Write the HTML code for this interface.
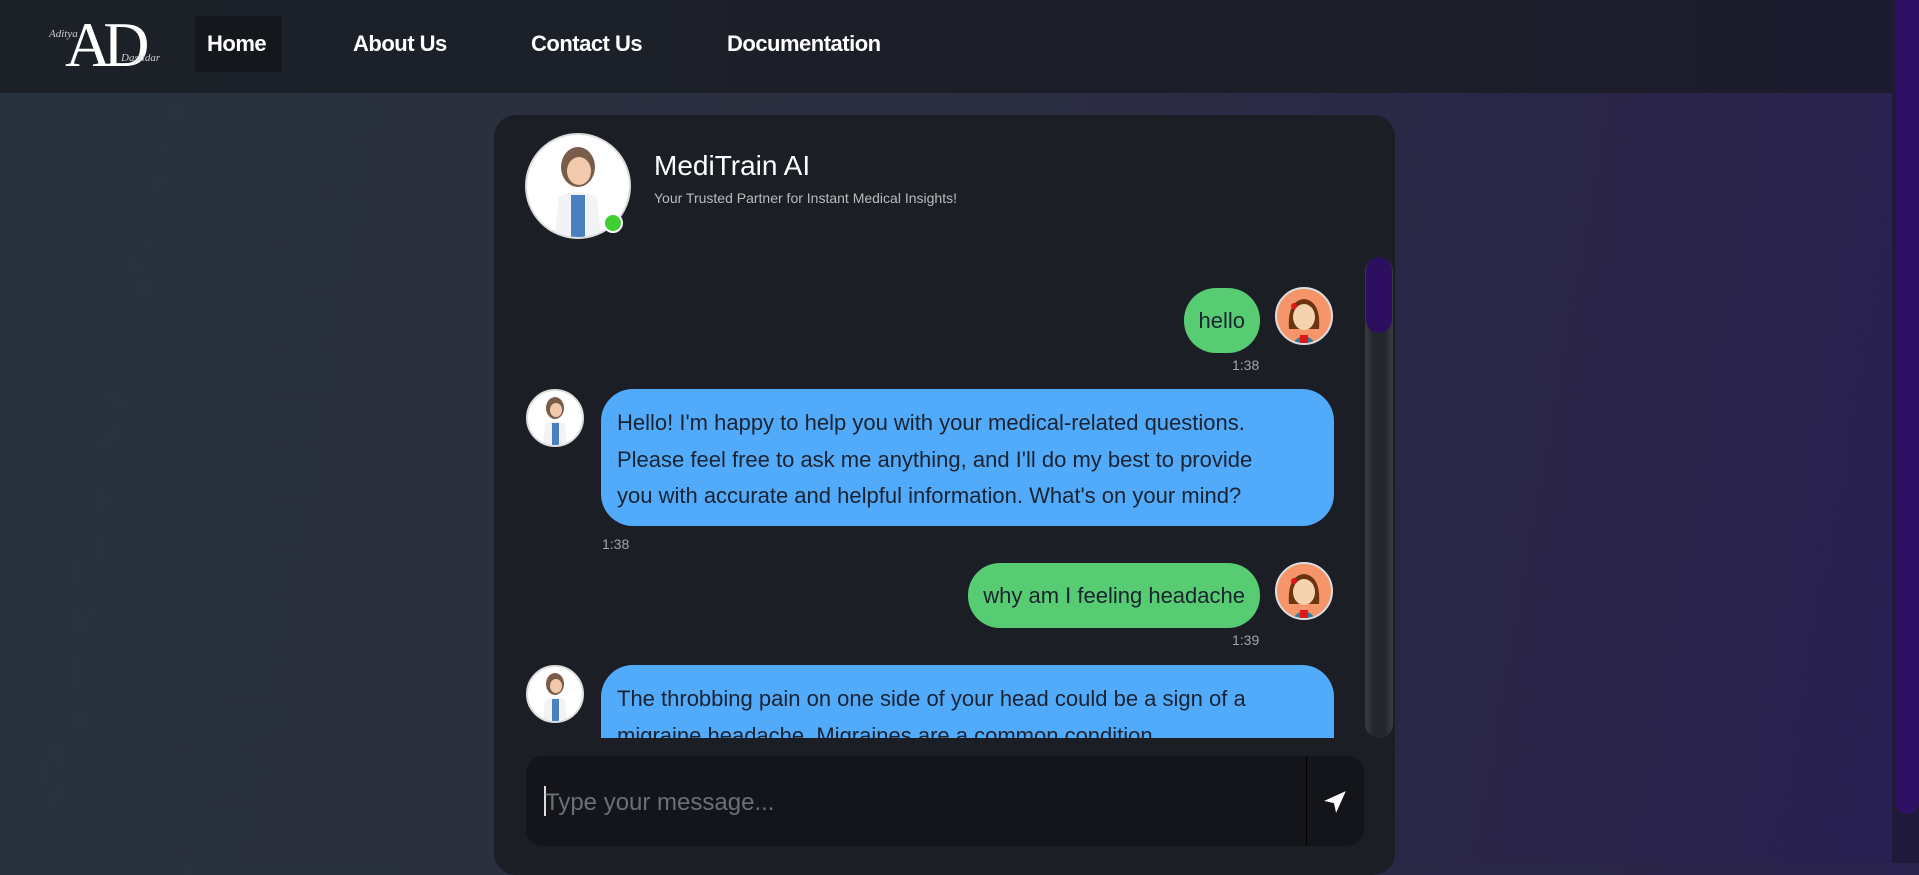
<!DOCTYPE html>
<html><head><meta charset="utf-8"><style>
*{box-sizing:border-box;margin:0;padding:0}
body{width:1919px;height:863px;overflow:hidden;font-family:"Liberation Sans",sans-serif;background:linear-gradient(100deg,#28323c 0%,#2b2f40 45%,#2a2548 80%,#281f52 100%);position:relative;color:#fff}
.nav{position:absolute;left:0;top:0;width:1892px;height:93px;background:linear-gradient(90deg,#1c2128,#1d1e28 70%,#1c1a2e);}
.nav a{position:absolute;top:31px;font-size:22px;font-weight:bold;color:#fff;text-decoration:none;letter-spacing:-0.5px}
.home{position:absolute;left:195px;top:16px;width:87px;height:56px;background:#14171b}
.sb{position:absolute;right:0;top:0;width:27px;height:863px;background:#1f1a3a}
.sb div{position:absolute;left:4px;top:0;width:23px;height:814px;background:#2e1065;border-radius:0 0 12px 12px}
.card{position:absolute;left:494px;top:115px;width:901px;height:760px;background:#1c1e26;border-radius:22px}
.abs{position:absolute}
.bub{position:absolute;font-size:22px;color:#1a2330;line-height:36.5px}
.g{background:#57cc72;border-radius:32px;height:65px;padding:0 15px;line-height:65px}
.b{background:#52aafa;border-radius:32px;padding:16px 16px;white-space:nowrap;overflow:hidden}
.t{position:absolute;font-size:14px;color:#a0a4ab}
.av{position:absolute;border-radius:50%;background:#fff;border:2px solid #ddd;overflow:hidden}
</style></head><body>
<div class="nav">
 <div class="abs" style="left:49px;top:14px;width:125px;height:60px">
  <span class="abs" style="left:16px;top:-6px;font-family:'Liberation Serif',serif;font-size:64px;color:#fff;letter-spacing:-8px">AD</span>
  <span class="abs" style="left:0;top:14px;font-family:'Liberation Serif',serif;font-style:italic;font-size:11px;color:#ccc">Aditya</span>
  <span class="abs" style="left:72px;top:38px;font-family:'Liberation Serif',serif;font-style:italic;font-size:11px;color:#ccc">Dastidar</span>
 </div>
 <div class="home"></div>
 <a style="left:207px">Home</a>
 <a style="left:353px">About Us</a>
 <a style="left:531px">Contact Us</a>
 <a style="left:727px">Documentation</a>
</div>
<div class="sb"><div></div></div>
<div class="card">
 <div class="av" style="left:31px;top:18px;width:106px;height:106px">
  <svg width="102" height="102" viewBox="0 0 102 102"><ellipse cx="51" cy="32" rx="17" ry="20" fill="#7a5c4a"/><ellipse cx="52" cy="36" rx="12" ry="14" fill="#f1c9ad"/><path d="M28 102 L32 62 Q51 52 70 62 L74 102Z" fill="#f3f3f5"/><rect x="44" y="60" width="14" height="42" fill="#4a7fc0"/></svg>
 </div>
 <div class="abs" style="left:109px;top:98px;width:20px;height:20px;border-radius:50%;background:#3fcf32;border:2px solid #fff"></div>
 <div class="abs" style="left:160px;top:35px;font-size:28px;color:#fff">MediTrain AI</div>
 <div class="abs" style="left:160px;top:75px;font-size:14px;color:#bbb">Your Trusted Partner for Instant Medical Insights!</div>
 <div class="abs" style="left:871px;top:142px;width:28px;height:481px;border-radius:14px;background:linear-gradient(90deg,#3a3c44,#24262e 30%,#24262e 70%,#3a3c44)"></div>
 <div class="abs" style="left:872px;top:142px;width:26px;height:76px;border-radius:13px;background:#2e0f5f"></div>
 <div style="position:absolute;left:0;top:142px;width:871px;height:481px;overflow:hidden">
  <div class="bub g" style="right:105px;top:31px">hello</div>
  <div class="av" style="left:781px;top:30px;width:58px;height:58px;background:#f7956a"><svg width="54" height="54" viewBox="0 0 54 54"><path d="M12 40 Q10 12 27 10 Q44 12 42 40Z" fill="#6b3410"/><ellipse cx="27" cy="28" rx="11" ry="13" fill="#f5d2b0"/><path d="M16 54 Q27 40 38 54Z" fill="#2f7fa0"/><rect x="23" y="46" width="8" height="8" fill="#e01818"/><circle cx="17" cy="17" r="3" fill="#e01818"/></svg></div>
  <div class="t" style="left:738px;top:100px">1:38</div>
  <div class="av" style="left:32px;top:132px;width:58px;height:58px"><svg width="54" height="54" viewBox="0 0 54 54"><ellipse cx="27" cy="17" rx="9" ry="11" fill="#7a5c4a"/><ellipse cx="28" cy="19" rx="6" ry="7" fill="#f1c9ad"/><path d="M15 54 L17 33 Q27 28 37 33 L39 54Z" fill="#f3f3f5"/><rect x="24" y="32" width="7" height="22" fill="#4a7fc0"/></svg></div>
  <div class="bub b" style="left:107px;top:132px;width:733px;height:137px">Hello! I'm happy to help you with your medical-related questions.<br>Please feel free to ask me anything, and I'll do my best to provide<br>you with accurate and helpful information. What's on your mind?</div>
  <div class="t" style="left:108px;top:279px">1:38</div>
  <div class="bub g" style="right:105px;top:306px">why am I feeling headache</div>
  <div class="av" style="left:781px;top:305px;width:58px;height:58px;background:#f7956a"><svg width="54" height="54" viewBox="0 0 54 54"><path d="M12 40 Q10 12 27 10 Q44 12 42 40Z" fill="#6b3410"/><ellipse cx="27" cy="28" rx="11" ry="13" fill="#f5d2b0"/><path d="M16 54 Q27 40 38 54Z" fill="#2f7fa0"/><rect x="23" y="46" width="8" height="8" fill="#e01818"/><circle cx="17" cy="17" r="3" fill="#e01818"/></svg></div>
  <div class="t" style="left:738px;top:375px">1:39</div>
  <div class="av" style="left:32px;top:408px;width:58px;height:58px"><svg width="54" height="54" viewBox="0 0 54 54"><ellipse cx="27" cy="17" rx="9" ry="11" fill="#7a5c4a"/><ellipse cx="28" cy="19" rx="6" ry="7" fill="#f1c9ad"/><path d="M15 54 L17 33 Q27 28 37 33 L39 54Z" fill="#f3f3f5"/><rect x="24" y="32" width="7" height="22" fill="#4a7fc0"/></svg></div>
  <div class="bub b" style="left:107px;top:408px;width:733px;height:200px;padding-top:16px">The throbbing pain on one side of your head could be a sign of a<br>migraine headache. Migraines are a common condition</div>
 </div>
 <div class="abs" style="left:32px;top:641px;width:838px;height:90px;background:#13151a;border-radius:17px">
  <div class="abs" style="left:780px;top:0;width:1px;height:90px;background:#000"></div>
  <div class="abs" style="left:18px;top:30px;width:2px;height:30px;background:#ddd"></div>
  <div class="abs" style="left:19px;top:33px;font-size:24px;color:#6c6f75">Type your message...</div>
  <svg class="abs" style="left:796px;top:33px" width="26" height="26" viewBox="0 0 24 24"><path d="M22 2 L2 11 L11 13 L13 22Z" fill="#fff"/></svg>
 </div>
</div>
</body></html>
